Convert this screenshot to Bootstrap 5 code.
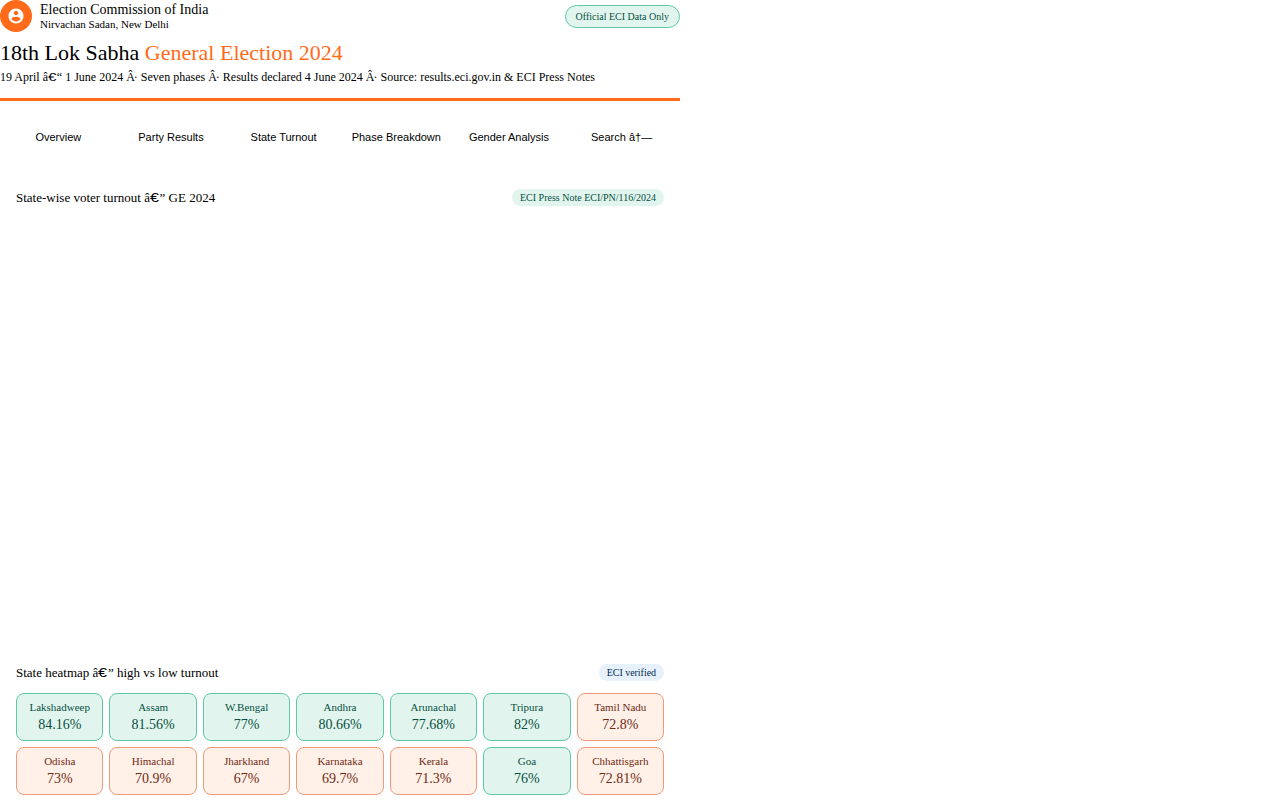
<!DOCTYPE html>
<html lang="en">
<head>
<meta charset="utf-8">
<meta name="viewport" content="width=device-width, initial-scale=1">
<title>18th Lok Sabha General Election 2024</title>
<link href="https://cdn.jsdelivr.net/npm/bootstrap@5.3.0/dist/css/bootstrap.min.css" rel="stylesheet">
<style>
  body { font-family: "Liberation Serif", "Times New Roman", serif; color: #000; line-height: normal; background: #fff; }
  .page { width: 680px; }
  .site-head { height: 101px; border-bottom: 3px solid #ff6b1a; }
  .logo { width: 32px; height: 32px; background: #ff6b1a; }
  .org { font-size: 14px; line-height: 16px; margin-top: 2px; }
  .place { font-size: 11px; line-height: 13px; }
  .official { font-size: 10px; line-height: 11px; padding: 5px 10px; color: #085041; background: #e1f5ee; border: 1px solid #5dcaa5; }
  .headline { font-size: 22px; line-height: 25px; font-weight: 400; margin: 8px 0 0; }
  .headline span { color: #ff6b1a; }
  .dates { font-size: 12px; line-height: 14px; margin: 5px 0 0; }
  .euro { font-family: "Liberation Sans", Arial, sans-serif; font-size: .96em; line-height: 1; display: inline-block; width: .55em; margin-right: .22em; transform: scaleX(1.3); transform-origin: left; }
  .dot { letter-spacing: -.083em; }
  .tabs { height: 72px; padding: 0 2px; }
  .tabs .nav-link { font: 11px/13px "Liberation Sans", Arial, sans-serif; color: #000; padding: 1px 0 0; }
  .panel-title { font-size: 13px; line-height: 15px; font-weight: 400; margin: 0; }
  .tag { font-size: 10px; line-height: 11px; padding: 3px 8px; }
  .tag-green { background: #e1f5ee; color: #085041; }
  .tag-blue { background: #e6f1fb; color: #042c53; letter-spacing: -.04px; font-variant-ligatures: common-ligatures; }
  .chart-area { height: 458px; }
  .heat { display: grid; grid-template-columns: repeat(7, minmax(0, 1fr)); gap: 6px; margin-top: 12px; }
  .tile { height: 48px; border: 1px solid; border-radius: 8px; padding-top: 7px; }
  .tile-name { font-size: 11px; line-height: 13px; }
  .tile-value { font-size: 14px; line-height: 16px; margin-top: 3px; }
  .high { background: #e1f5ee; border-color: #5dcaa5; color: #085041; }
  .low { background: #fff0e8; border-color: #f0997b; color: #712b13; }
</style>
</head>
<body>
<div class="page">
  <header class="site-head">
    <div class="d-flex align-items-center justify-content-between">
      <div class="d-flex gap-2">
        <div class="logo rounded-circle d-flex align-items-center justify-content-center">
          <svg width="18" height="18" viewBox="0 0 24 24" fill="#fff"><path d="M12 2C6.48 2 2 6.48 2 12s4.48 10 10 10 10-4.480 10-10S17.520 2 12 2zm0 3c1.660 0 3 1.340 3 3s-1.340 3-3 3-3-1.340-3-3 1.340-3 3-3zm0 14.200c-2.500 0-4.710-1.280-6-3.220.03-1.990 4-3.080 6-3.080 1.990 0 5.970 1.090 6 3.080-1.290 1.940-3.500 3.220-6 3.220z"/></svg>
        </div>
        <div>
          <div class="org">Election Commission of India</div>
          <div class="place">Nirvachan Sadan, New Delhi</div>
        </div>
      </div>
      <div class="official rounded-pill">Official ECI Data Only</div>
    </div>
    <h1 class="headline">18th Lok Sabha <span>General Election 2024</span></h1>
    <p class="dates">19 April â<span class="euro">€</span>“ 1 June 2024 <span class="dot">Â</span>· Seven phases <span class="dot">Â</span>· Results declared 4 June 2024 <span class="dot">Â</span>· Source: results.eci.gov.in &amp; ECI Press Notes</p>
  </header>

  <nav class="tabs nav flex-nowrap align-items-center text-center">
    <div class="col-2"><a class="nav-link">Overview</a></div>
    <div class="col-2"><a class="nav-link">Party Results</a></div>
    <div class="col-2"><a class="nav-link">State Turnout</a></div>
    <div class="col-2"><a class="nav-link">Phase Breakdown</a></div>
    <div class="col-2"><a class="nav-link">Gender Analysis</a></div>
    <div class="col-2"><a class="nav-link">Search â†—</a></div>
  </nav>

  <main class="px-3">
    <section>
      <div class="d-flex align-items-center justify-content-between mt-3">
        <h2 class="panel-title">State-wise voter turnout â<span class="euro">€</span>” GE 2024</h2>
        <span class="tag tag-green rounded-pill">ECI Press Note ECI/PN/116/2024</span>
      </div>
      <div class="chart-area"></div>
    </section>
    <section>
      <div class="d-flex align-items-center justify-content-between">
        <h2 class="panel-title">State heatmap â<span class="euro">€</span>” high vs low turnout</h2>
        <span class="tag tag-blue rounded-pill">ECI verified</span>
      </div>
      <div class="heat text-center">
        <div class="tile high"><div class="tile-name">Lakshadweep</div><div class="tile-value">84.16%</div></div>
        <div class="tile high"><div class="tile-name">Assam</div><div class="tile-value">81.56%</div></div>
        <div class="tile high"><div class="tile-name">W.Bengal</div><div class="tile-value">77%</div></div>
        <div class="tile high"><div class="tile-name">Andhra</div><div class="tile-value">80.66%</div></div>
        <div class="tile high"><div class="tile-name">Arunachal</div><div class="tile-value">77.68%</div></div>
        <div class="tile high"><div class="tile-name">Tripura</div><div class="tile-value">82%</div></div>
        <div class="tile low"><div class="tile-name">Tamil Nadu</div><div class="tile-value">72.8%</div></div>
        <div class="tile low"><div class="tile-name">Odisha</div><div class="tile-value">73%</div></div>
        <div class="tile low"><div class="tile-name">Himachal</div><div class="tile-value">70.9%</div></div>
        <div class="tile low"><div class="tile-name">Jharkhand</div><div class="tile-value">67%</div></div>
        <div class="tile low"><div class="tile-name">Karnataka</div><div class="tile-value">69.7%</div></div>
        <div class="tile low"><div class="tile-name">Kerala</div><div class="tile-value">71.3%</div></div>
        <div class="tile high"><div class="tile-name">Goa</div><div class="tile-value">76%</div></div>
        <div class="tile low"><div class="tile-name">Chhattisgarh</div><div class="tile-value">72.81%</div></div>
      </div>
    </section>
  </main>
</div>
<script src="https://cdn.jsdelivr.net/npm/bootstrap@5.3.0/dist/js/bootstrap.bundle.min.js"></script>
</body>
</html>
